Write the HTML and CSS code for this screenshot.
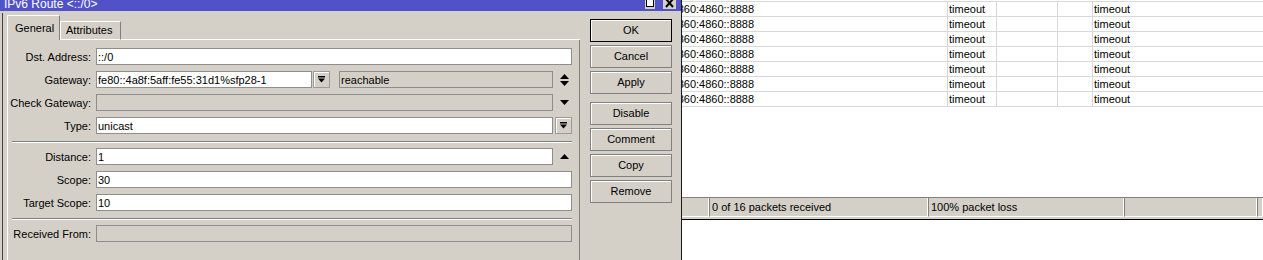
FILE: index.html
```html
<!DOCTYPE html>
<html>
<head>
<meta charset="utf-8">
<link rel="stylesheet" href="styles.css">
</head>
<body>
<div class="dialog">
  <div class="titlebar">
    <div class="title">IPv6 Route &lt;::/0&gt;</div>
    <div class="wbtns">
      <div class="wbtn max"><svg width="10" height="9" viewBox="0 0 10 9"><rect x="1.5" y="-0.5" width="7" height="7" fill="#fff" stroke="#000"/></svg></div>
      <div class="wbtn close"><svg width="13" height="9" viewBox="0 0 13 9"><path d="M3 -1 L10 7 M10 -1 L3 7" stroke="#000" stroke-width="2"/></svg></div>
    </div>
  </div>
  <div class="frame">
    <div class="tabs-area">
      <div class="tabstrip">
        <div class="tab active">General</div>
        <div class="tab">Attributes</div>
        <div class="tabfill"></div>
      </div>
      <div class="panel">
        <div class="form">
          <div class="lbl">Dst. Address:</div>
          <div class="fld"><div class="inp grow">::/0</div></div>

          <div class="lbl">Gateway:</div>
          <div class="fld">
            <div class="inp gw">fe80::4a8f:5aff:fe55:31d1%sfp28-1</div>
            <div class="ddbtn gwbtn"><svg width="7" height="7" viewBox="0 0 7 7"><rect x="0" y="0" width="7" height="1.5" fill="#000"/><polygon points="0,2.5 7,2.5 3.5,6.5" fill="#000"/></svg></div>
            <div class="inp ro reach">reachable</div>
            <div class="ico"><svg width="9" height="12" viewBox="0 0 9 12"><polygon points="0,5 9,5 4.5,0" fill="#000"/><polygon points="0,7 9,7 4.5,12" fill="#000"/></svg></div>
          </div>

          <div class="lbl">Check Gateway:</div>
          <div class="fld">
            <div class="inp ro mid"></div>
            <div class="ico"><svg width="9" height="5" viewBox="0 0 9 5"><polygon points="0,0 9,0 4.5,5" fill="#000"/></svg></div>
          </div>

          <div class="lbl">Type:</div>
          <div class="fld">
            <div class="inp mid">unicast</div>
            <div class="ddbtn typebtn"><svg width="7" height="7" viewBox="0 0 7 7"><rect x="0" y="0" width="7" height="1.5" fill="#000"/><polygon points="0,2.5 7,2.5 3.5,6.5" fill="#000"/></svg></div>
          </div>

          <div class="sep"></div>

          <div class="lbl">Distance:</div>
          <div class="fld">
            <div class="inp mid">1</div>
            <div class="ico"><svg width="9" height="5" viewBox="0 0 9 5"><polygon points="0,5 9,5 4.5,0" fill="#000"/></svg></div>
          </div>

          <div class="lbl">Scope:</div>
          <div class="fld"><div class="inp grow">30</div></div>

          <div class="lbl">Target Scope:</div>
          <div class="fld"><div class="inp grow">10</div></div>

          <div class="sep"></div>

          <div class="lbl">Received From:</div>
          <div class="fld"><div class="inp ro grow"></div></div>
        </div>
      </div>
    </div>
    <div class="btns">
      <div class="btn def">OK</div>
      <div class="btn">Cancel</div>
      <div class="btn">Apply</div>
      <div class="btn spaced">Disable</div>
      <div class="btn">Comment</div>
      <div class="btn">Copy</div>
      <div class="btn">Remove</div>
    </div>
  </div>
</div>
<div class="pane">
  <div class="tablewrap">
    <div class="tbl">
      <div class="row"><div class="c c1">2001:4860:4860::8888</div><div class="c c2">timeout</div><div class="c c3"></div><div class="c c4"></div><div class="c c5">timeout</div></div>
      <div class="row"><div class="c c1">2001:4860:4860::8888</div><div class="c c2">timeout</div><div class="c c3"></div><div class="c c4"></div><div class="c c5">timeout</div></div>
      <div class="row"><div class="c c1">2001:4860:4860::8888</div><div class="c c2">timeout</div><div class="c c3"></div><div class="c c4"></div><div class="c c5">timeout</div></div>
      <div class="row"><div class="c c1">2001:4860:4860::8888</div><div class="c c2">timeout</div><div class="c c3"></div><div class="c c4"></div><div class="c c5">timeout</div></div>
      <div class="row"><div class="c c1">2001:4860:4860::8888</div><div class="c c2">timeout</div><div class="c c3"></div><div class="c c4"></div><div class="c c5">timeout</div></div>
      <div class="row"><div class="c c1">2001:4860:4860::8888</div><div class="c c2">timeout</div><div class="c c3"></div><div class="c c4"></div><div class="c c5">timeout</div></div>
      <div class="row"><div class="c c1">2001:4860:4860::8888</div><div class="c c2">timeout</div><div class="c c3"></div><div class="c c4"></div><div class="c c5">timeout</div></div>
    </div>
  </div>
  <div class="status">
    <div class="sp sp1"></div>
    <div class="sp sp2">0 of 16 packets received</div>
    <div class="sp sp3">100% packet loss</div>
    <div class="sp sp4"></div>
    <div class="sp sp5"></div>
  </div>
  <div class="rest"></div>
</div>
</body>
</html>
```
FILE: styles.css
```css
* { box-sizing: border-box; }
html, body { margin: 0; padding: 0; }
body {
  width: 1263px;
  height: 260px;
  overflow: hidden;
  display: flex;
  background: #fff;
  font-family: "Liberation Sans", Arial, sans-serif;
  font-size: 11px;
  color: #000;
}

/* dialog */
.dialog {
  width: 682px;
  flex: none;
  background: #d4d0c8;
  border-right: 1px solid #1a1a1a;
  display: flex;
  flex-direction: column;
}
.titlebar {
  height: 11px;
  flex: none;
  background: #5252c8;
  color: #fff;
  display: flex;
  justify-content: space-between;
  overflow: hidden;
  padding: 0 5px 0 4px;
}
.title {
  font-size: 12px;
  line-height: 11px;
  margin-top: -1px;
  white-space: nowrap;
}
.wbtns { display: flex; gap: 8px; align-items: flex-start; }
.wbtn {
  height: 9px;
  background: #d4d0c8;
  display: flex;
  align-items: center;
  justify-content: center;
}
.wbtn svg { display: block; }
.wbtn.max { width: 10px; }
.wbtn.close { width: 13px; }

.frame {
  flex: 1;
  display: flex;
  margin: 2px 0 0 2px;
  border-left: 1px solid #404040;
}
.tabs-area {
  width: 573px;
  flex: none;
  margin-left: 4px;
  padding-top: 2px;
  display: flex;
  flex-direction: column;
}
.tabstrip { height: 25px; display: flex; align-items: flex-end; }
.tab {
  width: 61px;
  height: 19px;
  border-top: 1px solid #fff;
  border-left: 1px solid #fff;
  border-right: 1px solid #808080;
  border-bottom: 1px solid #fff;
  padding: 2px 0 0 5px;
  line-height: 13px;
  white-space: nowrap;
}
.tab.active {
  width: 53px;
  height: 25px;
  border-bottom: none;
  padding: 6px 0 0 7px;
}
.tabfill { flex: 1; height: 1px; background: #fff; }
.panel {
  flex: 1;
  border-left: 1px solid #fff;
  border-right: 1px solid #808080;
  padding: 8px 7px 0 0;
}
.form {
  display: grid;
  grid-template-columns: 83px 476px;
  column-gap: 5px;
  row-gap: 6px;
}
.lbl { text-align: right; line-height: 18px; height: 17px; white-space: nowrap; }
.fld { display: flex; height: 17px; }
.inp {
  height: 17px;
  border: 1px solid #8e8e8e;
  background: #fff;
  padding: 0 1px;
  line-height: 16px;
  white-space: nowrap;
  overflow: hidden;
}
.inp.ro { background: #d4d0c8; }
.grow { flex: 1; }
.gw { width: 216px; }
.reach { width: 214px; margin-left: 9px; }
.mid { width: 457px; }
.ddbtn {
  width: 17px;
  height: 17px;
  border: 1px solid #9a9a9a;
  box-shadow: inset 1px 1px #fff;
  background: #d4d0c8;
  display: flex;
  align-items: center;
  justify-content: center;
}
.ddbtn svg { display: block; }
.gwbtn { margin-left: 1px; }
.typebtn { margin-left: 2px; }
.ico {
  width: 19px;
  display: flex;
  align-items: center;
  padding-left: 7px;
}
.ico svg { display: block; }
.sep {
  grid-column: 1 / -1;
  height: 2px;
  border-top: 1px solid #808080;
  border-bottom: 1px solid #fff;
  margin: 1px 0 -1px 4px;
}

.btns {
  width: 82px;
  flex: none;
  margin: 6px 0 0 10px;
  display: flex;
  flex-direction: column;
  gap: 3px;
}
.btn {
  height: 23px;
  border: 1px solid #808080;
  box-shadow: inset 1px 1px #fff;
  display: flex;
  align-items: center;
  justify-content: center;
  padding-bottom: 1px;
  line-height: 13px;
}
.btn.def { border-color: #000; }
.btn.spaced { margin-top: 5px; }

/* right pane */
.pane {
  flex: 1;
  display: flex;
  flex-direction: column;
  overflow: hidden;
  background: #fff;
}
.tablewrap { height: 197px; flex: none; overflow: hidden; padding-top: 1px; }
.tbl { margin-left: -40px; border-top: 1px solid #d8d8d8; }
.row { display: flex; height: 15px; border-bottom: 1px solid #d8d8d8; }
.c {
  border-right: 1px solid #d8d8d8;
  line-height: 14px;
  white-space: nowrap;
  overflow: hidden;
  flex: none;
}
.c1 { width: 306px; padding-left: 2px; }
.c2 { width: 49px; padding-left: 1px; }
.c3 { width: 61px; }
.c4 { width: 35px; }
.c5 { flex: 1; border-right: none; padding-left: 1px; }

.status {
  height: 23px;
  flex: none;
  display: flex;
  background: #d4d0c8;
  border-top: 1px solid #808080;
  border-bottom: 1px solid #000;
  padding-bottom: 2px;
}
.sp {
  border-left: 1px solid #808080;
  border-right: 1px solid #fff;
  border-bottom: 1px solid #fff;
  line-height: 18px;
  padding-left: 2px;
  white-space: nowrap;
  flex: none;
}
.sp1 { width: 27px; border-left: none; }
.sp2 { width: 219px; }
.sp3 { width: 196px; }
.sp4 { width: 133px; }
.sp5 { flex: 1; }
.rest { flex: 1; background: #fff; }
```
